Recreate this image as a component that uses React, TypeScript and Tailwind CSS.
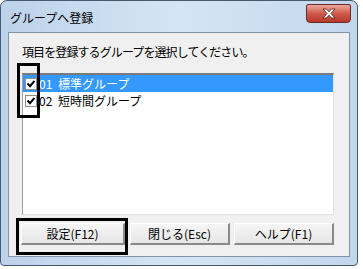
import React from "react";

function Check() {
  return (
    <svg width="12" height="12" viewBox="0 0 12 12" className="block shrink-0">
      <rect x="0.5" y="0.5" width="11" height="11" fill="#ffffff" stroke="#8e8f8f" />
      <path d="M2.5 5.5 L5 8.2 L9.5 2.8" fill="none" stroke="#000000" strokeWidth="2" />
    </svg>
  );
}

function Btn({ label, w }: { label: string; w: string }) {
  return (
    <div
      className={`${w} h-[22px] flex items-center justify-center text-[12px] leading-[12px] text-black bg-gradient-to-b from-[#f6f6f6] to-[#e6e6e6] border-t border-l border-t-[#ffffff] border-l-[#ffffff] border-r-[2px] border-b-[2px] border-r-[#8a8a8a] border-b-[#8a8a8a]`}
    >
      {label}
    </div>
  );
}

export default function App() {
  return (
    <div className="w-[363px] h-[269px] bg-white relative font-['Noto_Sans_CJK_JP','Noto_Sans',sans-serif]">
      <div className="w-[358px] h-[266px] rounded-t-[7px] rounded-b-[4px] border border-[#4a5a6e] bg-gradient-to-r from-[#bcd2ea] via-[#d6e5f5] to-[#c2d6ec] p-[1px] flex flex-col">
        <div className="h-[30px] flex items-start justify-between pl-[8px] pr-[5px]">
          <span className="mt-[10px] text-[12px] leading-[12px] text-black">グループへ登録</span>
          <div className="mt-[2px] w-[45px] h-[19px] rounded-b-[4px] rounded-t-[2px] border border-[#6b2a22] bg-gradient-to-b from-[#e9a89e] via-[#cf5a4c] to-[#b8362a] flex items-center justify-center">
            <svg width="14" height="11" viewBox="0 0 14 11">
              <path
                d="M1 1 H4.5 L7 3.8 L9.5 1 H13 L9 5.5 L13 10 H9.5 L7 7.2 L4.5 10 H1 L5 5.5 Z"
                fill="#ffffff"
                stroke="#5a2a24"
                strokeWidth="0.9"
              />
            </svg>
          </div>
        </div>
        <div className="mx-[6px] mb-[7px] flex-1 border border-[#8394aa] bg-[#f0f0f0] flex flex-col">
          <div className="mt-[13px] pl-[13px] text-[12px] leading-[12px] text-black tracking-[-0.9px]">
            項目を登録するグループを選択してください。
          </div>
          <div className="mt-[15px] ml-[13px] w-[312px] h-[142px] bg-white border-t-[2px] border-t-[#7a7a7a] border-l border-l-[#a0a0a0] border-r border-r-[#e3e3e3] border-b border-b-[#e3e3e3] flex flex-col">
            <div className="h-[17px] bg-[#3399ff] flex items-center pl-[2px] text-white text-[12px] leading-[12px]">
              <Check />
              <span className="ml-[2px] w-[19px]">01</span>
              <span>標準グループ</span>
            </div>
            <div className="h-[17px] flex items-center pl-[2px] text-black text-[12px] leading-[12px]">
              <Check />
              <span className="ml-[2px] w-[19px]">02</span>
              <span>短時間グループ</span>
            </div>
          </div>
          <div className="mt-[8px] pl-[12px] flex">
            <Btn label="設定(F12)" w="w-[104px]" />
            <div className="w-[5px]" />
            <Btn label="閉じる(Esc)" w="w-[100px]" />
            <div className="w-[4px]" />
            <Btn label="ヘルプ(F1)" w="w-[100px]" />
          </div>
        </div>
      </div>
      <div className="absolute left-[17px] top-[63px] w-[23px] h-[55px] border-[3px] border-black" />
      <div className="absolute left-[16px] top-[218px] w-[112px] h-[37px] border-[3px] border-black" />
    </div>
  );
}
